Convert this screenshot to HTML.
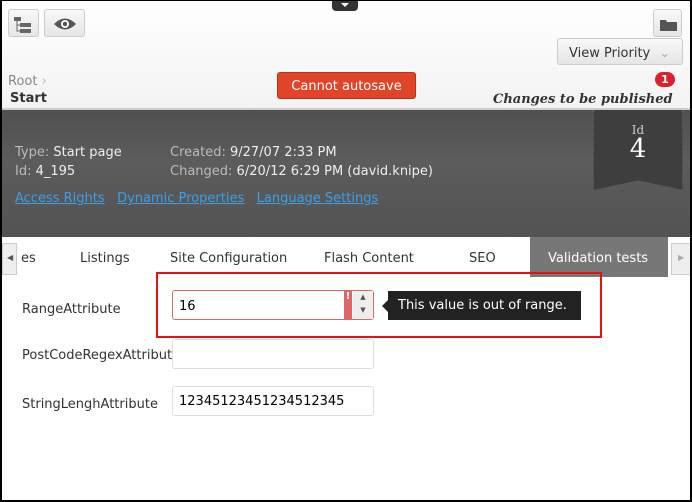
<!DOCTYPE html>
<html><head><style>
*{margin:0;padding:0;box-sizing:border-box}
body{width:692px;height:502px;overflow:hidden;font-family:"DejaVu Sans","Liberation Sans",sans-serif;font-size:13px;background:#000;position:relative}
.frame{position:absolute;left:2px;top:1px;right:2px;bottom:2px;background:#fff;overflow:hidden}
.hdr{position:absolute;left:0;top:0;width:100%;height:109px;background:linear-gradient(#fff,#f3f3f3);border-bottom:2px solid #ccc}
.btn{position:absolute;border:1px solid #ccc;border-radius:3px;background:linear-gradient(#f8f8f8,#e6e6e6)}
.dark{position:absolute;left:0;top:109px;width:100%;height:127px;background:linear-gradient(#505050,#5c5c5c 40%,#535353)}
.abs{position:absolute;white-space:nowrap}
.tabs{position:absolute;left:0;top:236px;width:100%;height:40px;background:#fff}
.tab{position:absolute;top:14px;color:#333;font-size:13px}
a{color:#3aa0e8;text-decoration:underline}
.inp{position:absolute;border:1px solid #ddd;border-radius:3px;height:30px;background:#fff;font-size:13px;padding:7px 6px}
</style></head><body>
<div class="frame">
<div class="hdr">
 <div class="btn" style="left:6px;top:8px;width:31px;height:28px">
  <svg width="31" height="28"><rect x="5" y="7" width="7" height="4" fill="#666"/><rect x="11" y="13" width="11" height="4" fill="#666"/><rect x="11" y="19" width="11" height="4" fill="#666"/><path d="M8 11V21H11M8 15H11" stroke="#666" fill="none"/></svg></div>
 <div class="btn" style="left:42px;top:8px;width:41px;height:28px">
  <svg width="41" height="28"><path d="M9 14Q20 3 31 14Q20 25 9 14Z" fill="#555"/><circle cx="20" cy="14" r="4" fill="#fff"/><circle cx="20" cy="14" r="2.2" fill="#555"/></svg></div>
 <div class="abs" style="left:330px;top:-2px;width:26px;height:12px;background:#333;border-radius:0 0 4px 4px"><svg width="26" height="12"><path d="M9 4H17L13 8Z" fill="#fff"/></svg></div>
 <div class="btn" style="left:651px;top:8px;width:29px;height:28px"><svg width="29" height="28"><path d="M6 10H12L13 12H23V21H6Z" fill="#555"/></svg></div>
 <div class="btn" style="left:555px;top:37px;width:126px;height:27px;border-radius:3px;font-size:13px;color:#333;padding:7px 0 0 11px">View Priority <span style="color:#aaa;margin-left:5px">&#8964;</span></div>
 <div class="abs" style="left:6px;top:73px;color:#888;font-size:13px">Root <span style="color:#bbb">&#x203A;</span></div>
 <div class="abs" style="left:8px;top:90px;color:#333;font-weight:bold;font-size:13px">Start</div>
 <div class="abs" style="left:275px;top:71px;width:139px;height:27px;background:#e0452a;border:1px solid #b8321e;border-radius:3px;color:#fff;text-align:center;padding-top:6px;font-size:13px">Cannot autosave</div>
 <div class="abs" style="left:653px;top:71px;width:20px;height:15px;background:#d9222a;border-radius:8px;color:#fff;font-size:11px;font-weight:bold;text-align:center;line-height:15px">1</div>
 <div class="abs" style="left:491px;top:91px;font-family:'DejaVu Serif','Liberation Serif',serif;font-style:italic;font-weight:bold;font-size:13px;color:#333">Changes to be published</div>
</div>
<div class="dark">
 <div class="abs" style="left:591px;top:0;width:90px;height:80px;background:#3e3e3e;clip-path:polygon(0 0,100% 0,100% 100%,50% 88%,0 100%);border-left:1px dotted #666;border-right:1px dotted #666"></div>
 <div class="abs" style="left:591px;top:13px;width:90px;text-align:center;color:#ccc;font-family:'DejaVu Serif',serif;font-size:12px">Id</div>
 <div class="abs" style="left:591px;top:24px;width:90px;text-align:center;color:#fff;font-family:'DejaVu Serif',serif;font-size:26px">4</div>
 <div class="abs" style="left:13px;top:35px;color:#bbb"><span>Type:</span> <span style="color:#eee">Start page</span></div>
 <div class="abs" style="left:13px;top:54px;color:#bbb">Id: <span style="color:#eee">4_195</span></div>
 <div class="abs" style="left:168px;top:35px;color:#bbb">Created: <span style="color:#eee">9/27/07 2:33 PM</span></div>
 <div class="abs" style="left:168px;top:54px;color:#bbb">Changed: <span style="color:#eee">6/20/12 6:29 PM (david.knipe)</span></div>
 <div class="abs" style="left:13px;top:81px"><a>Access Rights</a>&nbsp;&nbsp;&nbsp;<a>Dynamic Properties</a>&nbsp;&nbsp;&nbsp;<a>Language Settings</a></div>
</div>
<div class="tabs">
 <div class="abs" style="left:0;top:6px;width:15px;height:32px;background:#eee;border:1px solid #ccc;font-size:8px;color:#555;padding:9px 0 0 4px">&#9664;</div>
 <div class="tab" style="left:19px">es</div>
 <div class="tab" style="left:78px">Listings</div>
 <div class="tab" style="left:168px">Site Configuration</div>
 <div class="tab" style="left:322px">Flash Content</div>
 <div class="tab" style="left:467px">SEO</div>
 <div class="abs" style="left:528px;top:0;width:138px;height:40px;background:#777"></div>
 <div class="tab" style="left:546px;color:#fff">Validation tests</div>
 <div class="abs" style="left:669px;top:6px;width:20px;height:32px;background:#eee;border:1px solid #ccc;font-size:8px;color:#aaa;padding:9px 0 0 6px">&#9654;</div>
</div>
<div class="abs" style="left:154px;top:271px;width:446px;height:66px;border:2px solid #e81010"></div>
<div class="abs" style="left:20px;top:301px;color:#333">RangeAttribute</div>
<div class="inp" style="left:170px;top:289px;width:202px;border-color:#d46a6a;padding:0"><div style="position:absolute;left:6px;top:8px">16</div><div style="position:absolute;left:171px;top:0;width:8px;height:28px;background:#d66;color:#fff;font-size:10px;font-weight:bold;text-align:center">!</div><div style="position:absolute;left:180px;top:0;width:20px;height:28px;background:#eee;font-size:7px;color:#555;text-align:center;line-height:13px">&#9650;<br>&#9660;</div></div>
<div class="abs" style="left:386px;top:290px;width:193px;height:29px;background:#222;color:#fff;padding:7px 0 0 10px">This value is out of range.</div>
<div class="abs" style="left:380px;top:299px;width:0;height:0;border:6px solid transparent;border-right-color:#222;border-left:0"></div>
<div class="abs" style="left:20px;top:347px;color:#333;width:150px;overflow:hidden">PostCodeRegexAttribute</div>
<div class="inp" style="left:170px;top:338px;width:202px"></div>
<div class="abs" style="left:20px;top:396px;color:#333">StringLenghAttribute</div>
<div class="inp" style="left:170px;top:385px;width:202px">12345123451234512345</div>
</div>
</body></html>
